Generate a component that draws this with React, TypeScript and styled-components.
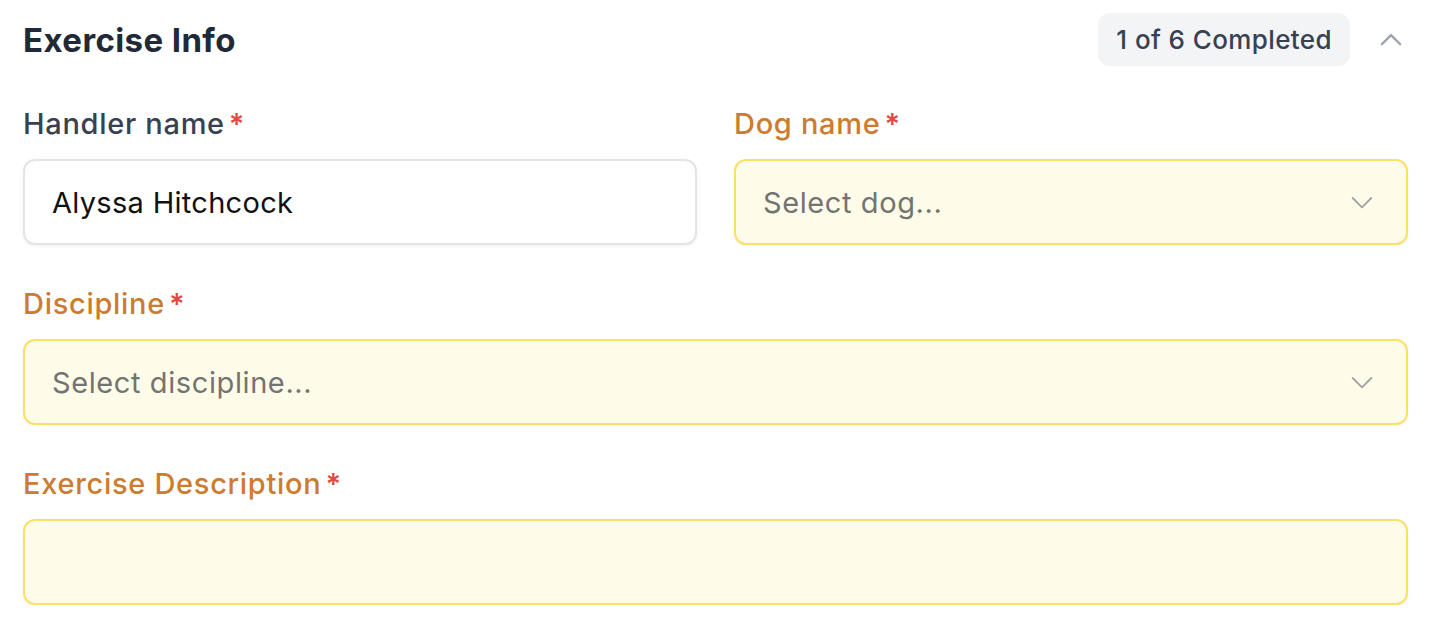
import React from 'react';
import styled, { createGlobalStyle } from 'styled-components';

const GlobalStyle = createGlobalStyle`
  html, body {
    margin: 0;
    padding: 0;
    background: #ffffff;
  }

  body {
    font-family: Inter, 'Noto Sans', 'Liberation Sans', sans-serif;
    -webkit-font-smoothing: antialiased;
  }
`;

function ChevronUp() {
  return (
    <svg width="34" height="34" viewBox="0 0 24 24" fill="none" stroke="currentColor" strokeWidth="1.7" strokeLinecap="round" strokeLinejoin="round">
      <path d="M5.5 15l6.5-6.5 6.5 6.5" />
    </svg>
  );
}

function ChevronDown() {
  return (
    <svg width="32" height="32" viewBox="0 0 24 24" fill="none" stroke="currentColor" strokeWidth="1.4" strokeLinecap="round" strokeLinejoin="round">
      <path d="M5 9l7 7 7-7" />
    </svg>
  );
}

interface FieldProps {
  label: string;
  pending?: boolean;
  children: React.ReactNode;
}

function Field({ label, pending, children }: FieldProps) {
  return (
    <FieldWrap>
      <Label $pending={pending}>
        {label}
        <Required>*</Required>
      </Label>
      {children}
    </FieldWrap>
  );
}

export default function App() {
  return (
    <>
      <GlobalStyle />
      <Section>
        <Header>
          <Title>Exercise Info</Title>
          <HeaderRight>
            <Badge>1 of 6 Completed</Badge>
            <ToggleButton type="button" aria-label="Collapse">
              <ChevronUp />
            </ToggleButton>
          </HeaderRight>
        </Header>

        <Fields>
          <TwoCol>
            <Field label="Handler name">
              <Box>
                <Value>Alyssa Hitchcock</Value>
              </Box>
            </Field>
            <Field label="Dog name" pending>
              <Box $pending>
                <Placeholder>Select dog...</Placeholder>
                <Caret>
                  <ChevronDown />
                </Caret>
              </Box>
            </Field>
          </TwoCol>

          <Field label="Discipline" pending>
            <Box $pending>
              <Placeholder>Select discipline...</Placeholder>
              <Caret>
                <ChevronDown />
              </Caret>
            </Box>
          </Field>

          <Field label="Exercise Description" pending>
            <Box $pending />
          </Field>
        </Fields>
      </Section>
    </>
  );
}

const Section = styled.section`
  padding: 13px 26px 0 23px;
`;

const Header = styled.div`
  display: flex;
  align-items: center;
  justify-content: space-between;
  height: 53px;
`;

const Title = styled.h2`
  margin: 0;
  font-size: 33px;
  font-weight: 700;
  color: #1f2937;
  letter-spacing: 0.4px;
`;

const HeaderRight = styled.div`
  display: flex;
  align-items: center;
  gap: 20px;
`;

const Badge = styled.span`
  display: inline-flex;
  align-items: center;
  height: 53px;
  padding: 0 18px;
  border-radius: 12px;
  background: #f3f4f6;
  color: #374151;
  font-size: 26px;
  font-weight: 500;
  letter-spacing: 0.4px;
`;

const ToggleButton = styled.button`
  display: flex;
  align-items: center;
  justify-content: center;
  width: 42px;
  height: 42px;
  padding: 0;
  margin-right: -4px;
  border: none;
  background: transparent;
  color: #9ca3af;
  cursor: pointer;
`;

const Fields = styled.div`
  display: flex;
  flex-direction: column;
  gap: 41px;
  margin-top: 40px;
`;

const TwoCol = styled.div`
  display: grid;
  grid-template-columns: 1fr 1fr;
  gap: 37px;
`;

const FieldWrap = styled.div`
  display: flex;
  flex-direction: column;
  gap: 17px;
`;

const Label = styled.label<{ $pending?: boolean }>`
  display: flex;
  align-items: baseline;
  height: 36px;
  line-height: 36px;
  font-size: 29px;
  font-weight: 500;
  letter-spacing: 0.7px;
  color: ${(p) => (p.$pending ? '#cd7b2e' : '#374151')};
`;

const Required = styled.span`
  margin-left: 4px;
  color: #e04a3f;
  font-weight: 600;
`;

const Box = styled.div<{ $pending?: boolean }>`
  display: flex;
  align-items: center;
  justify-content: space-between;
  box-sizing: border-box;
  height: 86px;
  padding: 0 28px 0 27px;
  border: 2px solid ${(p) => (p.$pending ? '#fbe068' : '#e3e4e7')};
  border-radius: 12px;
  background: ${(p) => (p.$pending ? '#fefce9' : '#ffffff')};
  box-shadow: 0 1px 3px rgba(0, 0, 0, 0.06);
  font-size: 29px;
  letter-spacing: 0.3px;
`;

const Value = styled.span`
  color: #111111;
`;

const Placeholder = styled.span`
  color: #737373;
  letter-spacing: 0.6px;
`;

const Caret = styled.span`
  display: flex;
  color: #a3a3a3;
`;
